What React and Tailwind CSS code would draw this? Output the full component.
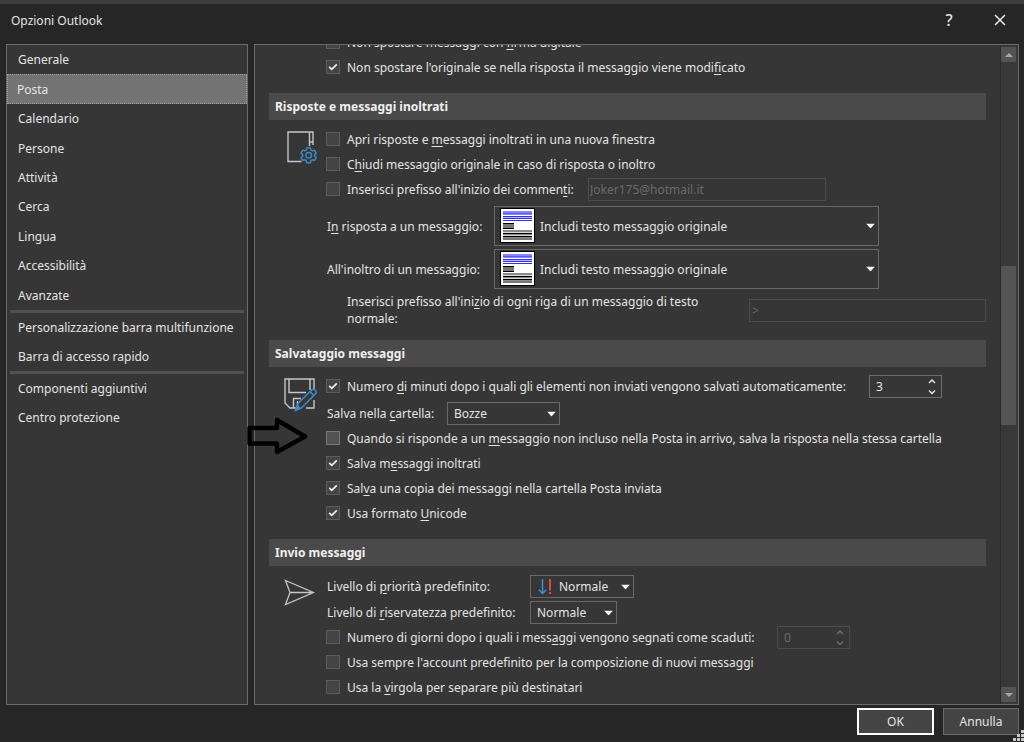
import React, { useState } from "react";

const NAV_GROUPS = [
  {
    height: "h-[265px]",
    items: ["Generale", "Posta", "Calendario", "Persone", "Attività", "Cerca", "Lingua", "Accessibilità", "Avanzate"],
  },
  { height: "h-[58px]", items: ["Personalizzazione barra multifunzione", "Barra di accesso rapido"] },
  { height: "h-[58px]", items: ["Componenti aggiuntivi", "Centro protezione"] },
];

// "&" marks the letter used as keyboard shortcut
function Mnemonic({ text }) {
  const i = text.indexOf("&");
  if (i < 0) return text;
  return (
    <>
      {text.slice(0, i)}
      <u className="underline underline-offset-2">{text[i + 1]}</u>
      {text.slice(i + 2)}
    </>
  );
}

function CheckRow({ id, text, defaultChecked = false, active = false, labelWidth = "", children }) {
  return (
    <div className="flex h-[25px] items-center">
      <span className="relative -ml-px mr-[7px] mb-px h-[14px] w-[14px] shrink-0">
        <input
          id={id}
          type="checkbox"
          defaultChecked={defaultChecked}
          className={
            active
              ? "peer block h-[14px] w-[14px] appearance-none border border-[#777777] bg-[#525252]"
              : "peer block h-[14px] w-[14px] appearance-none border border-[#5c5c5c] bg-[#444444]"
          }
        />
        <svg viewBox="0 0 14 14" className="pointer-events-none absolute inset-0 hidden h-[14px] w-[14px] peer-checked:block">
          <path d="M3.2 6.8 L5.8 9.4 L10.8 4.4" fill="none" stroke="#f0f0f0" strokeWidth="1.7" />
        </svg>
      </span>
      <label htmlFor={id} className={`whitespace-nowrap ${labelWidth}`}>
        <Mnemonic text={text} />
      </label>
      {children}
    </div>
  );
}

function Caret() {
  return (
    <svg viewBox="0 0 9 5" className="pointer-events-none absolute right-1 top-1/2 h-[5px] w-[9px] -translate-y-1/2">
      <path d="M0 0 H9 L4.5 5 Z" fill="#f5f5f5" />
    </svg>
  );
}

function Select({ id, option, className, icon }) {
  return (
    <div className="relative">
      <select id={id} className={`block appearance-none border border-[#686868] bg-[#363636] outline-none ${className}`}>
        <option>{option}</option>
      </select>
      {icon}
      <Caret />
    </div>
  );
}

function Spinner({ label, defaultValue, disabled = false }) {
  return (
    <div className={disabled ? "relative ml-3 text-[#6a6a6a]" : "relative ml-3 text-[#e4e4e4]"}>
      <input
        type="number"
        aria-label={label}
        defaultValue={defaultValue}
        disabled={disabled}
        className={
          disabled
            ? "block h-[23px] w-[73px] appearance-none border border-[#4c4c4c] bg-transparent px-[6px] [appearance:textfield]"
            : "block h-[23px] w-[73px] appearance-none border border-[#6e6e6e] bg-transparent px-[6px] [appearance:textfield]"
        }
      />
      <svg viewBox="0 0 8 16" className="pointer-events-none absolute right-[6px] top-[4px] h-4 w-2" fill="none" stroke="currentColor" strokeWidth="1.5">
        <path d="M1 4 L4 1 L7 4 M1 11.5 L4 14.5 L7 11.5" />
      </svg>
    </div>
  );
}

function QuoteThumb() {
  return (
    <svg viewBox="0 0 35 35" shapeRendering="crispEdges" className="pointer-events-none absolute left-[6px] top-[2px] h-[35px] w-[35px]">
      <rect width="35" height="35" fill="#000" />
      <rect x="1" y="1" width="33" height="33" fill="#fff" />
      <path d="M3 3h29v4h-29z" fill="#8585ff" />
      <path d="M3 5h29v1h-29z" fill="#5a5af5" />
      <path d="M3 8h29v1h-29zM3 10h29v1h-29zM3 12h29v1h-29z" fill="#3232ee" />
      <path d="M3 9h29v1h-29z" fill="#b4b4ff" />
      <path d="M3 15h11v6h-11z" fill="#777" />
      <path d="M3 15h11v1h-11zM3 20h11v1h-11z" fill="#000" />
      <path d="M3 22h29v10h-29z" fill="#8a8a8a" />
      <path d="M3 24h29v1h-29zM3 27h29v1h-29z" fill="#d8d8d8" />
      <path d="M3 25h29v1h-29zM3 28h29v1h-29z" fill="#000" />
      <path d="M3 30h29v2h-29z" fill="#777" />
    </svg>
  );
}

function PriorityIcon() {
  return (
    <svg viewBox="0 0 14 16" className="pointer-events-none absolute left-[8px] top-[4px] h-4 w-[14px]" fill="none" strokeWidth="1.5">
      <path d="M4.5 0 V14.5 M0.8 10.8 L4.5 14.5 L8.2 10.8" stroke="#3f8fd0" />
      <path d="M12 0 V11.5 M12 13 V15" stroke="#e04848" strokeWidth="2" />
    </svg>
  );
}

function ReplyIcon() {
  return (
    <svg viewBox="-2 0 34 34" className="h-[34px] w-[34px]" fill="none">
      <path d="M15.5 30.5 H2 V1 H27 V14 M23.5 1 V15 M23.5 11 H27" stroke="#c6c6c6" strokeWidth="1.4" />
      <path
        d="M21.3 17.3 h4 l0.8 2.6 1.4 .8 2.7 -.6 1.9 3.3 -1.9 2 v1.2 l1.9 2 -1.9 3.2 -2.7 -.6 -1.4 .8 -.8 2.6 h-4 l-.8 -2.6 -1.4 -.8 -2.7 .6 -1.9 -3.2 1.9 -2 v-1.2 l-1.9 -2 1.9 -3.3 2.7 .6 1.4 -.8 z"
        transform="translate(2.6 2) scale(.86)"
        stroke="#3b8bc8"
        strokeWidth="1.7"
      />
      <circle cx="22.7" cy="24.3" r="2.8" stroke="#3b8bc8" strokeWidth="1.4" />
    </svg>
  );
}

function SaveIcon() {
  return (
    <svg viewBox="0 0 34 34" className="h-[34px] w-[34px]" fill="none">
      <path d="M12 30 H6 L1 25 V1 H30 V11 M5 1 V14.5 H22 M26 1 V12 M9.5 30 V20.5 H17 M13.5 23 V28 M30 22 V30 H22" stroke="#c6c6c6" strokeWidth="1.4" />
      <path d="M11.5 32.5 L13.5 26 L28 11.7 C30 10.2 33.4 13.4 31.8 15.6 L17.2 30.2 Z M26 13.8 L29.8 17.6" stroke="#3b8bd0" strokeWidth="1.5" />
      <path d="M11.3 32.7 L13.3 26.5 L17.2 30.2 Z" fill="#3b8bd0" />
    </svg>
  );
}

function SendIcon() {
  return (
    <svg viewBox="0 -2 32 30" className="h-[30px] w-8" fill="none" stroke="#c6c6c6" strokeWidth="1.3">
      <path d="M1.5 1.5 L29.5 13.5 L1.5 25.5 L6 13.5 Z M6 13.5 H29.5" />
    </svg>
  );
}

function Section({ title, icon, children }) {
  return (
    <section className="mt-[13px]">
      <h2 className="flex h-[27px] items-center bg-[#4a4a4a] px-[6px] pb-px font-bold text-[#f0f0f0]">{title}</h2>
      <div className="flex">
        <div className="w-[58px] shrink-0 pl-[15px] pt-[11px]">{icon}</div>
        <div className="min-w-0 flex-1 pt-[7px]">{children}</div>
      </div>
    </section>
  );
}

function Sidebar() {
  const [current, setCurrent] = useState("Posta");
  return (
    <nav className="w-[242px] shrink-0 border border-[#6a6a6a] bg-[#363636]">
      {NAV_GROUPS.map((group, i) => (
        <div key={group.items[0]}>
          {i > 0 && <hr className="mx-[3px] h-[3px] border-0 bg-[#505050]" />}
          <ul className={`flex flex-col ${group.height}`}>
            {group.items.map((item) => (
              <li key={item} className="flex flex-1">
                <button
                  onClick={() => setCurrent(item)}
                  className={
                    item === current
                      ? "w-full border border-dotted border-[#9a9a9a] bg-[#737373] px-[9px] text-left whitespace-nowrap"
                      : "w-full px-[11px] text-left whitespace-nowrap"
                  }
                >
                  {item}
                </button>
              </li>
            ))}
          </ul>
        </div>
      ))}
    </nav>
  );
}

function Scrollbar() {
  return (
    <div className="flex w-[18px] shrink-0 flex-col border-l border-[#2a2a2a] bg-[#383838] py-[2px] pr-[2px]">
      <button aria-label="Scorri su" className="flex h-[15px] items-center justify-center bg-[#545454]">
        <svg viewBox="0 0 8 4" className="h-1 w-2"><path d="M0 4 L4 0 L8 4 Z" fill="#a8a8a8" /></svg>
      </button>
      <div className="flex flex-1 flex-col">
        <div className="flex-[204]" />
        <div className="flex-[158] bg-[#545454]" />
        <div className="flex-[262]" />
      </div>
      <button aria-label="Scorri giù" className="flex h-[15px] items-center justify-center bg-[#545454]">
        <svg viewBox="0 0 8 4" className="h-1 w-2"><path d="M0 0 H8 L4 4 Z" fill="#a8a8a8" /></svg>
      </button>
    </div>
  );
}

export default function App() {
  return (
    <div className="flex h-screen flex-col overflow-hidden border-t-4 border-[#3c3c3a] bg-[#262626] font-['Noto_Sans','Open_Sans',sans-serif] text-[12px] leading-[17px] text-[#e4e4e4]">
      <header className="flex h-10 shrink-0 items-center pb-2 pl-[11px] pr-[17px]">
        <h1 className="flex-1">Opzioni Outlook</h1>
        <button aria-label="Guida" className="mr-9 w-4 text-center text-base font-medium">?</button>
        <button aria-label="Chiudi">
          <svg viewBox="0 0 14 14" className="h-[14px] w-[14px]" stroke="#f0f0f0" strokeWidth="1.5">
            <path d="M2 2 L12 12 M12 2 L2 12" />
          </svg>
        </button>
      </header>

      <div className="flex min-h-0 flex-1 gap-[6px] pl-[6px] pr-[5px]">
        <Sidebar />

        <main className="relative flex min-w-0 flex-1 border border-[#6a6a6a] bg-[#363636]">
          <div className="min-w-0 flex-1 overflow-hidden px-[14px]">
            <div className="-mt-[15px] pl-[58px]">
              <CheckRow id="signed" text="Non spostare messaggi con &firma digitale" />
              <CheckRow id="keep" text="Non spostare l'originale se nella risposta il messaggio viene modi&ficato" defaultChecked />
            </div>

            <Section title="Risposte e messaggi inoltrati" icon={<ReplyIcon />}>
              <CheckRow id="new-window" text="Apri risposte e &messaggi inoltrati in una nuova finestra" />
              <CheckRow id="close-original" text="C&hiudi messaggio originale in caso di risposta o inoltro" />
              <CheckRow id="prefix" text="Inserisci prefisso all'inizio dei commen&ti:" labelWidth="min-w-[231px]">
                <input
                  aria-label="Prefisso dei commenti"
                  disabled
                  defaultValue="Joker175@hotmail.it"
                  className="ml-[10px] h-[23px] w-[238px] border border-[#4c4c4c] bg-transparent px-px text-[#6a6a6a]"
                />
              </CheckRow>
              <div className="mt-1 flex items-center">
                <label htmlFor="on-reply" className="w-[167px] whitespace-nowrap"><Mnemonic text="I&n risposta a un messaggio:" /></label>
                <Select id="on-reply" option="Includi testo messaggio originale" className="h-[40px] w-[385px] pl-[45px]" icon={<QuoteThumb />} />
              </div>
              <div className="mt-[3px] flex items-center">
                <label htmlFor="on-forward" className="w-[167px] whitespace-nowrap"><Mnemonic text="All'inoltro di un messaggio:" /></label>
                <Select id="on-forward" option="Includi testo messaggio originale" className="h-[40px] w-[385px] pl-[45px]" icon={<QuoteThumb />} />
              </div>
              <div className="mt-1 flex items-center justify-between pl-5">
                <label htmlFor="line-prefix" className="w-[375px]">
                  <Mnemonic text="Inserisci prefisso all'ini&zio di ogni riga di un messaggio di testo normale:" />
                </label>
                <input
                  id="line-prefix"
                  disabled
                  defaultValue=">"
                  className="h-[23px] w-[237px] border border-[#4c4c4c] bg-transparent px-[2px] text-[#6a6a6a]"
                />
              </div>
            </Section>

            <Section title="Salvataggio messaggi" icon={<SaveIcon />}>
              <CheckRow
                id="autosave"
                text="Numero &di minuti dopo i quali gli elementi non inviati vengono salvati automaticamente:"
                labelWidth="min-w-[510px]"
                defaultChecked
              >
                <Spinner label="Minuti" defaultValue={3} />
              </CheckRow>
              <div className="flex h-[27px] items-center pt-[2px]">
                <label htmlFor="folder" className="w-[120px] whitespace-nowrap"><Mnemonic text="Salva nella &cartella:" /></label>
                <Select id="folder" option="Bozze" className="h-[23px] w-[113px] pl-[6px]" />
              </div>
              <CheckRow id="same-folder" text="Quando si risponde a un &messaggio non incluso nella Posta in arrivo, salva la risposta nella stessa cartella" active />
              <CheckRow id="save-forwarded" text="Salva m&essaggi inoltrati" defaultChecked />
              <CheckRow id="save-copy" text="Sal&va una copia dei messaggi nella cartella Posta inviata" defaultChecked />
              <CheckRow id="unicode" text="Usa formato &Unicode" defaultChecked />
            </Section>

            <Section title="Invio messaggi" icon={<SendIcon />}>
              <div className="flex h-[27px] items-center">
                <label htmlFor="priority" className="w-[203px] whitespace-nowrap"><Mnemonic text="Livello di &priorità predefinito:" /></label>
                <Select id="priority" option="Normale" className="h-[23px] w-[104px] pl-7" icon={<PriorityIcon />} />
              </div>
              <div className="flex h-[25px] items-center">
                <label htmlFor="privacy" className="w-[203px] whitespace-nowrap"><Mnemonic text="Livello di &riservatezza predefinito:" /></label>
                <Select id="privacy" option="Normale" className="h-[23px] w-[87px] pl-[6px]" />
              </div>
              <CheckRow
                id="expire"
                text="Numero di giorni dopo i quali i mess&aggi vengono segnati come scaduti:"
                labelWidth="min-w-[418px]"
              >
                <Spinner label="Giorni" defaultValue={0} disabled />
              </CheckRow>
              <CheckRow id="default-account" text="Usa sempre l'account predef&inito per la composizione di nuovi messaggi" />
              <CheckRow id="comma" text="Usa la &virgola per separare più destinatari" />
            </Section>
          </div>

          <Scrollbar />

          <svg viewBox="0 0 62 38" className="pointer-events-none absolute -left-2 top-[372px] h-[38px] w-[62px]">
            <path d="M2.5 11 H30 V3 L58 19.5 L30 35 V26.5 H2.5 Z" fill="none" stroke="#000" strokeWidth="4.4" strokeLinejoin="round" />
          </svg>
        </main>
      </div>

      <footer className="relative flex shrink-0 justify-end gap-[9px] pb-[7px] pr-[5px] pt-[3px]">
        <button className="h-[27px] w-[77px] border-2 border-white bg-[#444444]">OK</button>
        <button className="h-[27px] w-[76px] border border-[#6a6a6a] bg-[#444444]">Annulla</button>
        <svg viewBox="0 0 11 11" className="absolute bottom-px right-0 h-[11px] w-[11px]" fill="#c8c8c8">
          <path d="M8 0h3v3h-3zM4 4h3v3h-3zM8 4h3v3h-3zM0 8h3v3h-3zM4 8h3v3h-3zM8 8h3v3h-3z" />
        </svg>
      </footer>
    </div>
  );
}
